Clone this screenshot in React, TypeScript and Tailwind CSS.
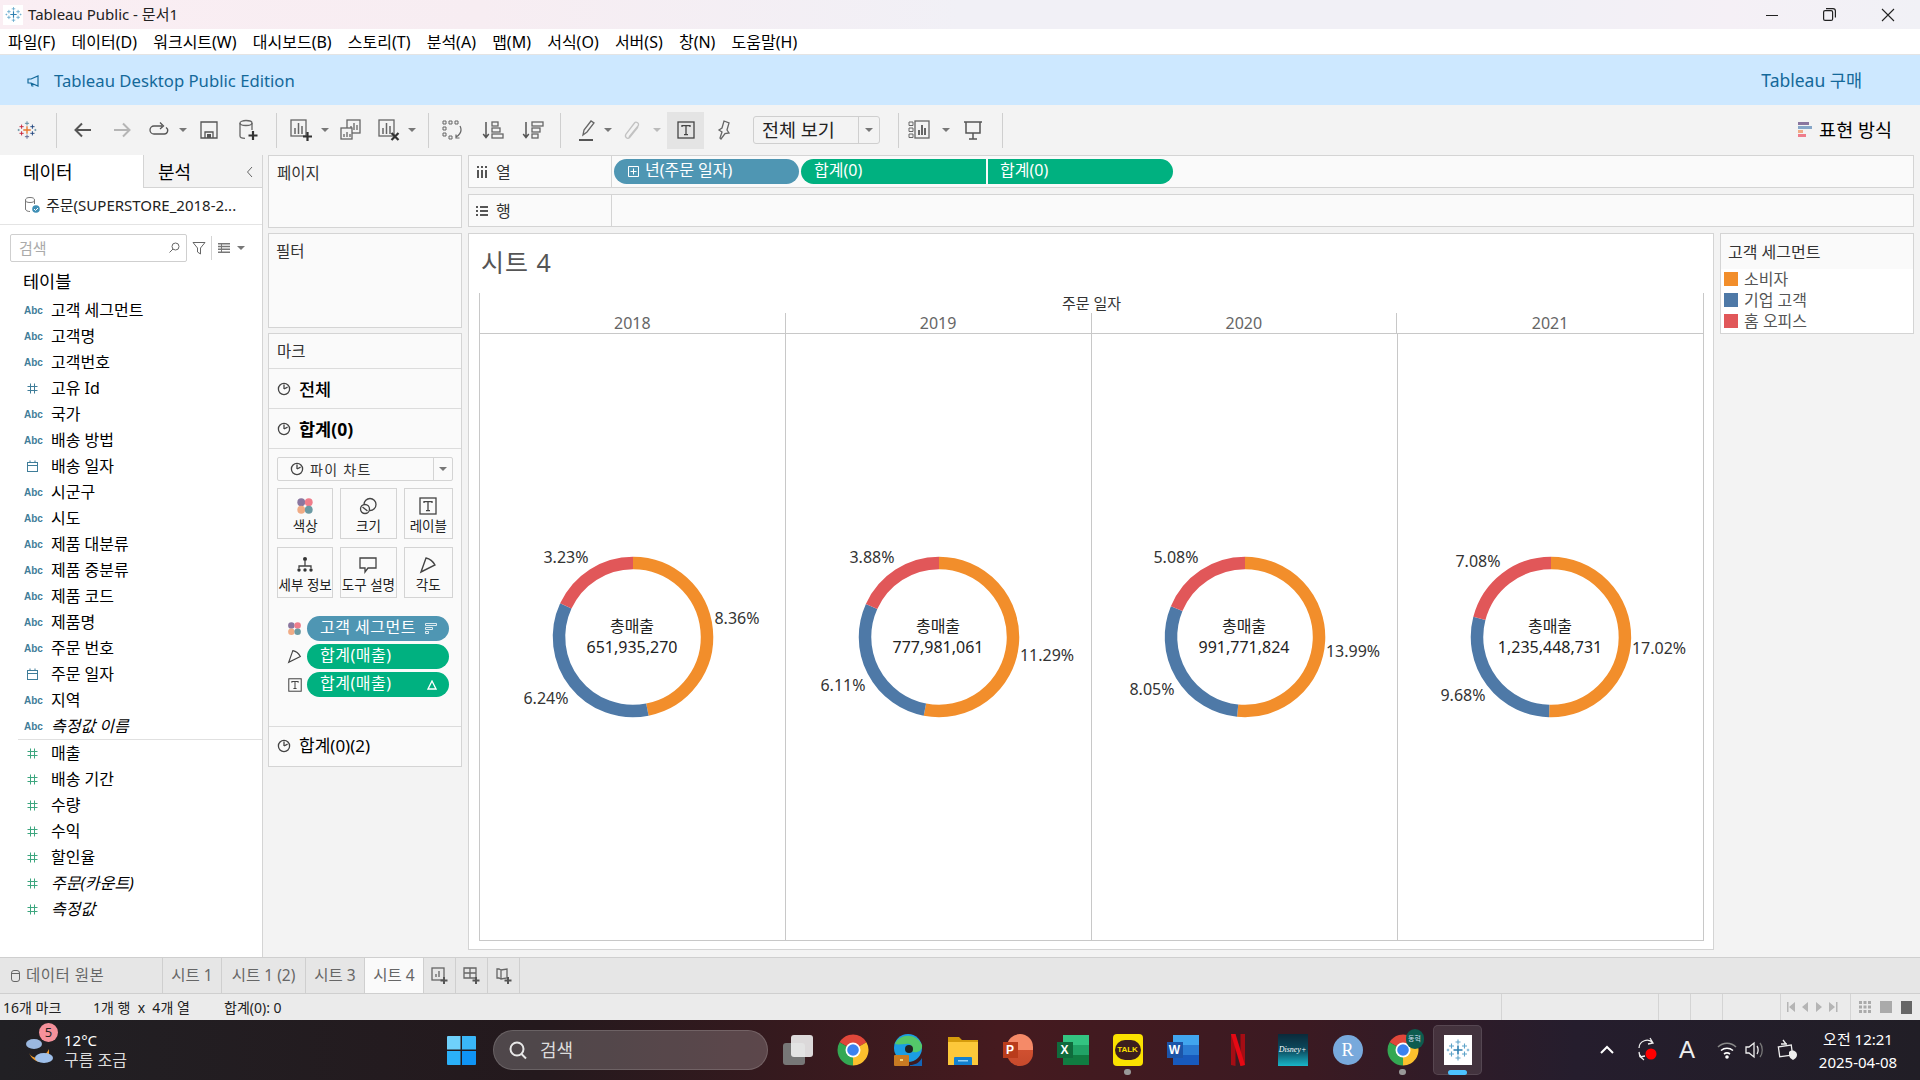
import type { ReactNode } from 'react'

const menus = ['파일(F)', '데이터(D)', '워크시트(W)', '대시보드(B)', '스토리(T)', '분석(A)', '맵(M)', '서식(O)', '서버(S)', '창(N)', '도움말(H)']

type Field = { kind: 'abc' | 'num' | 'date'; name: string; italic?: boolean }

const dimensions: Field[] = [
  { kind: 'abc', name: '고객 세그먼트' },
  { kind: 'abc', name: '고객명' },
  { kind: 'abc', name: '고객번호' },
  { kind: 'num', name: '고유 Id' },
  { kind: 'abc', name: '국가' },
  { kind: 'abc', name: '배송 방법' },
  { kind: 'date', name: '배송 일자' },
  { kind: 'abc', name: '시군구' },
  { kind: 'abc', name: '시도' },
  { kind: 'abc', name: '제품 대분류' },
  { kind: 'abc', name: '제품 중분류' },
  { kind: 'abc', name: '제품 코드' },
  { kind: 'abc', name: '제품명' },
  { kind: 'abc', name: '주문 번호' },
  { kind: 'date', name: '주문 일자' },
  { kind: 'abc', name: '지역' },
  { kind: 'abc', name: '측정값 이름', italic: true },
]

const measures: Field[] = [
  { kind: 'num', name: '매출' },
  { kind: 'num', name: '배송 기간' },
  { kind: 'num', name: '수량' },
  { kind: 'num', name: '수익' },
  { kind: 'num', name: '할인율' },
  { kind: 'num', name: '주문(카운트)', italic: true },
  { kind: 'num', name: '측정값', italic: true },
]

type Slice = { label: string; value: number; x: number; y: number }

const years: { year: string; total: string; orange: Slice; blue: Slice; red: Slice }[] = [
  {
    year: '2018',
    total: '651,935,270',
    orange: { label: '8.36%', value: 8.36, x: 257, y: 284 },
    blue: { label: '6.24%', value: 6.24, x: 66, y: 364 },
    red: { label: '3.23%', value: 3.23, x: 86, y: 223 },
  },
  {
    year: '2019',
    total: '777,981,061',
    orange: { label: '11.29%', value: 11.29, x: 261, y: 321 },
    blue: { label: '6.11%', value: 6.11, x: 57, y: 351 },
    red: { label: '3.88%', value: 3.88, x: 86, y: 223 },
  },
  {
    year: '2020',
    total: '991,771,824',
    orange: { label: '13.99%', value: 13.99, x: 261, y: 317 },
    blue: { label: '8.05%', value: 8.05, x: 60, y: 355 },
    red: { label: '5.08%', value: 5.08, x: 84, y: 223 },
  },
  {
    year: '2021',
    total: '1,235,448,731',
    orange: { label: '17.02%', value: 17.02, x: 261, y: 314 },
    blue: { label: '9.68%', value: 9.68, x: 65, y: 361 },
    red: { label: '7.08%', value: 7.08, x: 80, y: 227 },
  },
]

function Icon({ size = 24, box = 24, className = '', children }: { size?: number; box?: number; className?: string; children: ReactNode }) {
  return (
    <svg width={size} height={size} viewBox={`0 0 ${box} ${box}`} fill="none" stroke="#666" strokeWidth="1.3" className={`shrink-0 ${className}`}>
      {children}
    </svg>
  )
}

function TableauMark({ size = 20, colored = false }: { size?: number; colored?: boolean }) {
  const c = colored
    ? { a: '#e8762c', b: '#c72037', c: '#5b6591', d: '#1f447e', e: '#59879b' }
    : { a: '#2f7fb0', b: '#5da3c9', c: '#5da3c9', d: '#5da3c9', e: '#5da3c9' }
  const cross = (x: number, y: number, r: number, color: string, w: number) => (
    <path key={`${x}-${y}`} d={`M${x - r} ${y}H${x + r}M${x} ${y - r}V${y + r}`} stroke={color} strokeWidth={w} />
  )
  return (
    <svg width={size} height={size} viewBox="0 0 24 24" className="shrink-0">
      {cross(12, 12, 4.5, c.a, 1.6)}
      {cross(12, 4, 2.5, c.e, 1.1)}
      {cross(12, 20, 2.5, c.c, 1.1)}
      {cross(5.5, 8, 2.5, c.b, 1.1)}
      {cross(18.5, 8, 2.5, c.d, 1.1)}
      {cross(5.5, 16, 2.5, c.b, 1.1)}
      {cross(18.5, 16, 2.5, c.d, 1.1)}
      {cross(2, 12, 1.3, c.e, 0.9)}
      {cross(22, 12, 1.3, c.e, 0.9)}
    </svg>
  )
}

function Caret({ className = '' }: { className?: string }) {
  return <span className={`h-0 w-0 shrink-0 border-x-[4px] border-t-[4px] border-x-transparent border-t-[#777] ${className}`} />
}

function Sep({ className = '' }: { className?: string }) {
  return <span className={`h-[35px] w-px shrink-0 bg-[#cfcfcf] ${className}`} />
}

function PieGlyph({ size = 14 }: { size?: number }) {
  return (
    <Icon size={size} box={14} className="shrink-0">
      <circle cx="7" cy="7" r="5.6" stroke="#444" />
      <path d="M7 7V2.5M7 7l3.6-1.8" stroke="#444" />
    </Icon>
  )
}

function DotsGlyph({ size = 24 }: { size?: number }) {
  return (
    <svg width={size} height={size} viewBox="0 0 24 24" className="shrink-0">
      <circle cx="7" cy="7" r="5.2" fill="#8a769f" />
      <circle cx="17" cy="7" r="5.2" fill="#ef7d8b" />
      <circle cx="7" cy="17" r="5.2" fill="#f0ab85" />
      <circle cx="17" cy="17" r="5.2" fill="#6b9aa3" />
    </svg>
  )
}

function TextGlyph({ size = 18 }: { size?: number }) {
  return (
    <Icon size={size} box={18}>
      <rect x="1" y="1" width="16" height="16" stroke="#444" />
      <path d="M5 6V4.6h8V6M9 4.6v9M7 13.6h4" stroke="#444" />
    </Icon>
  )
}

function AngleGlyph({ size = 18 }: { size?: number }) {
  return (
    <Icon size={size} box={18}>
      <path d="M2 16 7 2c4 .8 7 3.4 9 7z" stroke="#444" strokeWidth="1.4" />
    </Icon>
  )
}

function BarsBox({ x = 2, y = 2 }: { x?: number; y?: number }) {
  return (
    <>
      <rect x={x} y={y} width="15" height="16" />
      <path d={`M${x + 4} ${y + 14}V${y + 8}M${x + 7.5} ${y + 14}V${y + 3}M${x + 11} ${y + 14}V${y + 6}`} strokeWidth="1.5" />
    </>
  )
}

function ToolBar() {
  return (
    <div className="flex h-[50px] items-center bg-[#f3f3f3]">
      <span className="ml-[17px]">
        <TableauMark colored size={20} />
      </span>
      <Sep className="ml-[19px]" />
      <Icon className="ml-[14px]">
        <path d="M20 12H5M11 5.5 4.5 12l6.5 6.5" strokeWidth="2" stroke="#555" />
      </Icon>
      <Icon className="ml-[15px]">
        <path d="M4 12h15M13 5.5l6.5 6.5-6.5 6.5" strokeWidth="2" stroke="#b5b5b5" />
      </Icon>
      <Icon className="ml-[13px]">
        <path d="M15 8H7a4 4 0 0 0 0 8h10a3.5 3.5 0 0 0 2-6.5M13 4.5 16.5 8 13 11" stroke="#555" />
      </Icon>
      <Caret className="ml-[8px]" />
      <Icon className="ml-[10px]">
        <path d="M4 4h16v16H4zM8 20v-6h8v6" stroke="#555" />
        <rect x="10" y="16" width="4" height="4" fill="#555" stroke="none" />
      </Icon>
      <Icon className="ml-[15px]">
        <ellipse cx="10" cy="5" rx="6" ry="2.5" />
        <path d="M4 5v13c0 1.3 2 2.3 5 2.4M16 5v7" />
        <path d="M17 13v9M12.5 17.5h9" stroke="#333" strokeWidth="2.2" />
      </Icon>
      <Sep className="ml-[16px]" />
      <Icon className="ml-[12px]">
        <BarsBox />
        <path d="M18.5 14v9M14 18.5h9" stroke="#333" strokeWidth="2.2" />
      </Icon>
      <Caret className="ml-[8px]" />
      <Icon className="ml-[9px]">
        <rect x="9" y="2" width="13" height="13" fill="#f3f3f3" />
        <path d="M13 12V8M16 12V5M19 12V7" />
        <rect x="3" y="10" width="11" height="11" fill="#f3f3f3" />
        <path d="M6 19v-3M9 19v-5M12 19v-3" />
      </Icon>
      <Icon className="ml-[15px]">
        <BarsBox />
        <path d="m14.5 15 7 7M21.5 15l-7 7" stroke="#333" strokeWidth="2.2" />
      </Icon>
      <Caret className="ml-[7px]" />
      <Sep className="ml-[12px]" />
      <Icon className="ml-[11px]">
        <path d="M3 3h3v3H3zM9 3h3v3H9zM15 3h3v3h-3zM3 9h3v3H3zM3 15h3v3H3zM9 18h3v3H9z" strokeWidth="1" />
        <path d="M20 8c2 4 1 8-4 11M16 16.5V20h3.5" strokeWidth="1.2" />
      </Icon>
      <Icon className="ml-[16px]">
        <path d="M6 4v15M3.2 16 6 19.5 8.8 16" stroke="#555" strokeWidth="1.5" />
        <rect x="12" y="4" width="6" height="4" />
        <rect x="12" y="10" width="8" height="4" />
        <rect x="12" y="16" width="11" height="4" />
      </Icon>
      <Icon className="ml-[16px]">
        <path d="M6 4v15M3.2 16 6 19.5 8.8 16" stroke="#555" strokeWidth="1.5" />
        <rect x="12" y="4" width="11" height="4" />
        <rect x="12" y="10" width="8" height="4" />
        <rect x="12" y="16" width="6" height="4" />
      </Icon>
      <Sep className="ml-[16px]" />
      <Icon className="ml-[14px]">
        <path d="m8 17 1-5 7-9 3 2-7 9z" />
        <path d="M4 22h14" stroke="#555" strokeWidth="2" />
      </Icon>
      <Caret className="ml-[5px]" />
      <Icon className="ml-[8px]">
        <path d="m9 19 9-11c2-2.5-2-5-3.500-3L6 16c-1.800 3 1.500 6 4 3l8-10" stroke="#c2c2c2" />
      </Icon>
      <Caret className="ml-[9px] border-t-[#bbb]" />
      <span className="ml-[6px] flex h-[37px] w-[37px] shrink-0 items-center justify-center bg-[#e4e4e4]">
        <TextGlyph size={18} />
      </span>
      <Icon className="ml-[6px]">
        <path d="m14 3 5 2-2 7 2 3-4 .5L11 21l-1-1 2-6-3-2 3-2z" />
      </Icon>
      <div className="ml-[19px] flex h-[28px] w-[127px] shrink-0 items-center rounded-[3px] border border-[#cfcfcf]">
        <span className="w-[104px] whitespace-nowrap pl-[8px] text-[18.5px] text-[#222]">전체 보기</span>
        <span className="flex h-full flex-1 items-center justify-center border-l border-[#cfcfcf]">
          <Caret className="border-t-[#555]" />
        </span>
      </div>
      <Sep className="ml-[18px]" />
      <Icon className="ml-[8px]">
        <path d="M2 4h4v3.500H2zM2 10h4v3.500H2zM2 16h4v3.500H2z" strokeWidth="1" />
        <rect x="8" y="3" width="14" height="17" />
        <path d="M12 17v-5M15 17V7M18 17v-7" strokeWidth="2" />
      </Icon>
      <Caret className="ml-[11px]" />
      <Icon className="ml-[11px]">
        <path d="M3 4h18M5 4v11h14V4M12 15v6M8 21h8" stroke="#555" strokeWidth="1.5" />
      </Icon>
      <Sep className="ml-[17px]" />
      <div className="ml-auto mr-[28px] flex items-center gap-[7px]">
        <svg width="14" height="16" viewBox="0 0 14 16" className="shrink-0">
          <rect y="0" width="11" height="3" fill="#8a769f" />
          <rect y="4" width="14" height="3" fill="#86a6c8" />
          <rect y="8" width="5" height="3" fill="#f0ab85" />
          <rect y="12" width="8" height="3" fill="#ef7d8b" />
        </svg>
        <span className="text-[18.5px] text-black">표현 방식</span>
      </div>
    </div>
  )
}

function FieldRow({ field, tone }: { field: Field; tone: 'dim' | 'measure' }) {
  const color = tone === 'dim' ? '#3f7d99' : '#3da67f'
  return (
    <div className="flex h-[26px] items-center pl-[24px]">
      <span className="flex w-[27px] shrink-0 items-center">
        {field.kind === 'abc' && <span className="w-[17px] text-center font-['Liberation_Sans',sans-serif] text-[10px] font-bold text-[#3f7d99]">Abc</span>}
        {field.kind === 'num' && (
          <svg width="17" height="11" viewBox="0 0 17 11" fill="none" stroke={color} strokeWidth="1">
            <path d="M6.500 0.500V10.500M10.500 0.500V10.500M3.500 3.500H13.500M3.500 7.500H13.500" />
          </svg>
        )}
        {field.kind === 'date' && (
          <svg width="17" height="12" viewBox="0 0 17 12" fill="none" stroke={color} strokeWidth="1">
            <rect x="3.500" y="2.500" width="10" height="9" />
            <path d="M3.500 5.500h10M6 0.500v2M11 0.500v2" />
          </svg>
        )}
      </span>
      <span className={`text-[16px] text-black ${field.italic ? 'italic' : ''}`}>{field.name}</span>
    </div>
  )
}

function DataPane() {
  return (
    <aside className="flex w-[263px] shrink-0 flex-col border-r border-[#d4d4d4] bg-white">
      <div className="flex h-[33px]">
        <div className="flex w-[144px] items-center border-r border-[#d4d4d4] pl-[23px] pt-[2px] text-[18px] text-black">데이터</div>
        <div className="flex flex-1 items-center border-b border-[#d4d4d4] bg-[#f3f3f3] pl-[14px] pt-[2px] text-[18px] text-black">
          분석
          <svg width="8" height="12" viewBox="0 0 8 12" fill="none" stroke="#666" className="ml-[55px]">
            <path d="M6 1 1.500 6 6 11" />
          </svg>
        </div>
      </div>
      <div className="flex h-[37px] items-center gap-[6px] border-b border-[#e4e4e4] pb-[2px] pl-[24px]">
        <svg width="16" height="18" viewBox="0 0 16 18" fill="none" stroke="#777" className="shrink-0">
          <ellipse cx="6" cy="4" rx="4.500" ry="2.500" />
          <path d="M1.500 4v9c0 1.500 2 2.500 4.500 2.500M10.500 4v4" />
          <circle cx="12" cy="13" r="3.800" fill="#3f8fb5" stroke="none" />
          <path d="m10 13 1.500 1.500L14 12" stroke="#fff" />
        </svg>
        <span className="text-[15px] text-[#222]">주문(SUPERSTORE_2018-2...</span>
      </div>
      <div className="flex items-center pl-[10px] pt-[9px]">
        <div className="flex h-[28px] w-[177px] items-center justify-between rounded-[2px] border border-[#cfcfcf] pl-[8px] pr-[6px]">
          <span className="text-[15px] text-[#aaa]">검색</span>
          <svg width="12" height="12" viewBox="0 0 12 12" fill="none" stroke="#666">
            <circle cx="7.500" cy="4.500" r="3.500" />
            <path d="M5 7 1.500 10.500" />
          </svg>
        </div>
        <svg width="14" height="14" viewBox="0 0 14 14" fill="none" stroke="#666" className="ml-[5px]">
          <path d="M1 1.500h12L8.500 7v6L5.500 11V7z" />
        </svg>
        <span className="ml-[5px] h-[24px] w-px bg-[#d4d4d4]" />
        <svg width="12" height="10" viewBox="0 0 12 10" fill="#777" className="ml-[6px]">
          <path d="M0 0h12v1.500H0zM0 2.800h12v1.500H0zM0 5.600h12v1.500H0zM0 8.400h12v1.500H0zM3 0h1v10H3z" />
        </svg>
        <Caret className="ml-[7px]" />
      </div>
      <div className="flex h-[35px] items-center pb-[3px] pl-[23px] pt-[6px] text-[17.5px] text-black">테이블</div>
      <div>
        {dimensions.map((f) => (
          <FieldRow key={f.name} field={f} tone="dim" />
        ))}
      </div>
      <div className="ml-[18px] h-px bg-[#e0e0e0]" />
      <div>
        {measures.map((f) => (
          <FieldRow key={f.name} field={f} tone="measure" />
        ))}
      </div>
    </aside>
  )
}

function MarkRow({ label, weight }: { label: string; weight: string }) {
  return (
    <div className={`flex h-[40px] items-center gap-[8px] border-b border-[#dcdcdc] pl-[8px] text-[17.5px] text-black ${weight}`}>
      <PieGlyph />
      <span className="pt-[1px]">{label}</span>
    </div>
  )
}

function MarkButton({ label, wide, children }: { label: string; wide: boolean; children: ReactNode }) {
  return (
    <div className={`flex h-[51px] flex-col items-center border border-[#d4d4d4] pt-[6px] ${wide ? 'w-[57px]' : 'w-[50px]'}`}>
      <span className="flex h-[22px] items-center">{children}</span>
      <span className="whitespace-nowrap text-[13.5px] leading-[18px] text-[#222]">{label}</span>
    </div>
  )
}

function MarkPill({ icon, label, end }: { icon: ReactNode; label: string; end?: ReactNode }) {
  return (
    <div className="flex h-[25px] items-center">
      <span className="flex w-[30px] justify-center pl-[5px]">{icon}</span>
      <div className={`flex h-[25px] w-[142px] items-center justify-between rounded-[13px] pl-[13px] pr-[12px] text-[16px] tracking-[0.5px] text-white ${label.startsWith('고객') ? 'bg-[#4f96b3]' : 'bg-[#00b180]'}`}>
        <span className="-mt-[3px] whitespace-nowrap">{label}</span>
        {end}
      </div>
    </div>
  )
}

function SidePanels() {
  return (
    <div className="ml-[5px] flex w-[194px] shrink-0 flex-col">
      <div className="h-[73px] border border-[#d4d4d4] bg-[#fafafa] pl-[8px] pt-[6px] text-[15.5px] text-[#333]">페이지</div>
      <div className="mt-[5px] h-[95px] border border-[#d4d4d4] bg-[#fafafa] pl-[7px] pt-[6px] text-[15.5px] text-[#333]">필터</div>
      <div className="mt-[5px] h-[434px] border border-[#d4d4d4] bg-[#fafafa]">
        <div className="flex h-[35px] items-center border-b border-[#dcdcdc] pl-[8px] pt-[2px] text-[15.5px] text-[#333]">마크</div>
        <MarkRow label="전체" weight="font-medium" />
        <MarkRow label="합계(0)" weight="font-bold" />
        <div className="mx-[8px] mt-[8px] flex h-[24px] items-center rounded-[2px] border border-[#d4d4d4]">
          <span className="flex w-[155px] items-center gap-[6px] whitespace-nowrap pl-[12px] text-[14px] tracking-[1.3px] text-[#333]">
            <PieGlyph />
            파이 차트
          </span>
          <span className="flex h-full flex-1 items-center justify-center border-l border-[#d4d4d4]">
            <Caret className="border-t-[#555]" />
          </span>
        </div>
        <div className="mx-[8px] mt-[7px] flex flex-col gap-[8px]">
          <div className="flex gap-[7px]">
            <MarkButton label="색상" wide>
              <DotsGlyph size={18} />
            </MarkButton>
            <MarkButton label="크기" wide>
              <Icon size={18} box={18}>
                <circle cx="11" cy="7.500" r="6" stroke="#444" />
                <circle cx="6" cy="12" r="4.500" fill="#fafafa" stroke="#444" />
                <path d="m3.500 10 5 4" stroke="#444" />
              </Icon>
            </MarkButton>
            <MarkButton label="레이블" wide={false}>
              <TextGlyph />
            </MarkButton>
          </div>
          <div className="flex gap-[7px]">
            <MarkButton label="세부 정보" wide>
              <Icon size={18} box={18}>
                <circle cx="9" cy="3" r="2" fill="#333" stroke="none" />
                <path d="M9 5v5M3 12v-2h12v2" stroke="#444" />
                <circle cx="3" cy="14" r="1.700" fill="#333" stroke="none" />
                <circle cx="9" cy="14" r="1.700" fill="#333" stroke="none" />
                <circle cx="15" cy="14" r="1.700" fill="#333" stroke="none" />
              </Icon>
            </MarkButton>
            <MarkButton label="도구 설명" wide>
              <Icon size={18} box={18}>
                <path d="M1 2h16v10H9l-3 4v-4H1z" stroke="#444" />
              </Icon>
            </MarkButton>
            <MarkButton label="각도" wide={false}>
              <AngleGlyph />
            </MarkButton>
          </div>
        </div>
        <div className="mt-[18px] flex flex-col gap-[3px] pl-[8px]">
          <MarkPill
            icon={<DotsGlyph size={15} />}
            label="고객 세그먼트"
            end={
              <svg width="12" height="11" viewBox="0 0 12 11" fill="none" stroke="#fff">
                <path d="M0.500 0.500h11v2h-11zM0.500 4.500h7v2h-7zM0.500 8.500h3v2h-3z" strokeWidth="0.800" />
              </svg>
            }
          />
          <MarkPill icon={<AngleGlyph size={15} />} label="합계(매출)" />
          <MarkPill
            icon={<TextGlyph size={14} />}
            label="합계(매출)"
            end={
              <svg width="10" height="10" viewBox="0 0 10 10" fill="none" stroke="#fff" strokeWidth="1.300">
                <path d="M5 1 1 9h8z" />
              </svg>
            }
          />
        </div>
        <div className="mt-[29px] flex h-[39px] items-center gap-[8px] border-t border-[#dcdcdc] pl-[8px] text-[17px] text-black">
          <PieGlyph />
          합계(0)(2)
        </div>
      </div>
    </div>
  )
}

function Shelf({ label, icon, children }: { label: string; icon: ReactNode; children?: ReactNode }) {
  return (
    <div className="flex h-[33px] border border-[#d4d4d4] bg-[#fafafa]">
      <div className="flex w-[143px] items-center gap-[8px] border-r border-[#d4d4d4] pl-[7px] text-[16px] text-[#333]">
        {icon}
        {label}
      </div>
      <div className="flex items-center gap-[2px] pl-[2px]">{children}</div>
    </div>
  )
}

function arc(cx: number, cy: number, r: number, from: number, to: number) {
  const pt = (t: number) => {
    const a = t * 2 * Math.PI - Math.PI / 2
    return `${(cx + r * Math.cos(a)).toFixed(2)} ${(cy + r * Math.sin(a)).toFixed(2)}`
  }
  return `M${pt(from)}A${r} ${r} 0 ${to - from > 0.5 ? 1 : 0} 1 ${pt(to)}`
}

function Donut({ data }: { data: (typeof years)[number] }) {
  const total = data.orange.value + data.blue.value + data.red.value
  const parts = [
    { s: data.orange, color: '#f28e2b' },
    { s: data.blue, color: '#4e79a7' },
    { s: data.red, color: '#e15759' },
  ]
  let start = 0
  return (
    <svg width="305" height="606" viewBox="0 0 305 606" className="block">
      {parts.map((p) => {
        const end = start + p.s.value / total
        const el = <path key={p.color} d={arc(153, 303, 74, start, end)} fill="none" stroke={p.color} strokeWidth="12.500" />
        start = end
        return el
      })}
      {parts.map((p) => (
        <text key={p.s.label} x={p.s.x} y={p.s.y} textAnchor="middle" dominantBaseline="central" className="fill-[#333] text-[16px]">
          {p.s.label}
        </text>
      ))}
      <text x="152" y="292" textAnchor="middle" dominantBaseline="central" className="fill-[#222] text-[16px]">
        총매출
      </text>
      <text x="152" y="313" textAnchor="middle" dominantBaseline="central" className="fill-[#222] text-[16px]">
        {data.total}
      </text>
    </svg>
  )
}

function SheetView() {
  return (
    <div className="flex h-[717px] w-[1246px] shrink-0 flex-col border border-[#d4d4d4] bg-white pl-[10px] pr-[9px]">
      <div className="flex h-[59px] items-center pb-[2px] pl-[2px] text-[25px] tracking-[1px] text-[#555]">시트 4</div>
      <div className="flex h-[648px] flex-col border-x border-b border-[#c8c8c8]">
        <div className="flex h-[20px] items-center justify-center text-[15px] text-[#333]">주문 일자</div>
        <div className="flex h-[21px] border-b border-[#c8c8c8]">
          {years.map((y, i) => (
            <div key={y.year} className={`flex w-[306px] items-center justify-center text-[16px] text-[#666] ${i < 3 ? 'border-r border-[#c8c8c8]' : ''}`}>
              {y.year}
            </div>
          ))}
        </div>
        <div className="flex flex-1">
          {years.map((y, i) => (
            <div key={y.year} className={`w-[306px] ${i < 3 ? 'border-r border-[#c8c8c8]' : ''}`}>
              <Donut data={y} />
            </div>
          ))}
        </div>
      </div>
    </div>
  )
}

function Legend() {
  const items = [
    ['소비자', 'bg-[#f28e2b]'],
    ['기업 고객', 'bg-[#4e79a7]'],
    ['홈 오피스', 'bg-[#e15759]'],
  ]
  return (
    <div className="h-[101px] w-[194px] shrink-0 border border-[#d4d4d4] bg-white">
      <div className="flex h-[35px] items-center bg-[#fafafa] pl-[7px] text-[16px] text-[#333]">고객 세그먼트</div>
      <div className="flex flex-col gap-[7px] pl-[3px] pt-[3px]">
        {items.map(([label, bg]) => (
          <div key={label} className="flex h-[14px] items-center gap-[6px]">
            <span className={`h-[14px] w-[14px] ${bg}`} />
            <span className="text-[16px] text-[#555]">{label}</span>
          </div>
        ))}
      </div>
    </div>
  )
}

function MainArea() {
  return (
    <div className="flex flex-1">
      <DataPane />
      <SidePanels />
      <div className="ml-[6px] flex w-[1446px] shrink-0 flex-col gap-[6px]">
        <Shelf
          label="열"
          icon={
            <svg width="12" height="12" viewBox="0 0 12 12" fill="#555">
              <path d="M1 4h2v8H1zM5 4h2v8H5zM9 4h2v8H9zM1 0h2v2H1zM5 0h2v2H5zM9 0h2v2H9z" />
            </svg>
          }
        >
          <div className="flex h-[25px] w-[185px] items-center gap-[6px] rounded-[13px] bg-[#4f96b3] pl-[14px] text-[16px] text-white">
            <svg width="11" height="11" viewBox="0 0 11 11" fill="none" stroke="#fff" className="shrink-0">
              <path d="M0.500 0.500h10v10h-10zM5.500 2.500v6M2.500 5.500h6" />
            </svg>
            <span className="-mt-[3px]">년(주문 일자)</span>
          </div>
          <div className="flex h-[25px] w-[185px] items-center rounded-l-[13px] bg-[#00b180] pl-[13px] text-[16px] text-white">
            <span className="-mt-[3px]">합계(0)</span>
          </div>
          <div className="flex h-[25px] w-[185px] items-center rounded-r-[13px] bg-[#00b180] pl-[12px] text-[16px] text-white">
            <span className="-mt-[3px]">합계(0)</span>
          </div>
        </Shelf>
        <Shelf
          label="행"
          icon={
            <svg width="12" height="12" viewBox="0 0 12 12" fill="#555">
              <path d="M0 1h2v2H0zM4 1h8v2H4zM0 5h2v2H0zM4 5h8v2H4zM0 9h2v2H0zM4 9h8v2H4z" />
            </svg>
          }
        />
        <div className="flex gap-[6px]">
          <SheetView />
          <Legend />
        </div>
      </div>
    </div>
  )
}

function SheetTabs() {
  const tabs = [
    { name: '시트 1', w: 'w-[59px]' },
    { name: '시트 1 (2)', w: 'w-[84px]' },
    { name: '시트 3', w: 'w-[59px]' },
  ]
  return (
    <div className="flex h-[37px] border-y border-[#cfcfcf] bg-[#e6e6e6]">
      <div className="flex w-[163px] items-center gap-[6px] border-r border-[#cfcfcf] pl-[11px] pt-[1px] text-[15.5px] tracking-[0.5px] text-[#666]">
        <svg width="9" height="12" viewBox="0 0 9 12" fill="none" stroke="#666" className="shrink-0">
          <rect x="0.500" y="0.500" width="8" height="11" rx="2.500" />
          <path d="M0.500 3.500h8" />
        </svg>
        데이터 원본
      </div>
      {tabs.map((t) => (
        <div key={t.name} className={`flex ${t.w} items-center justify-center whitespace-nowrap border-r border-[#cfcfcf] pt-[1px] text-[15.5px] text-[#666]`}>
          {t.name}
        </div>
      ))}
      <div className="flex w-[59px] items-center justify-center border-r border-[#cfcfcf] bg-[#fafafa] pt-[1px] text-[15.5px] text-[#666]">시트 4</div>
      <div className="flex w-[32px] items-center justify-center border-r border-[#cfcfcf]">
        <Icon size={18} box={18}>
          <rect x="1" y="1" width="12" height="12" />
          <path d="M5 10V7M8 10V4" />
          <path d="M13 10v7M9.500 13.500h7" stroke="#555" strokeWidth="2" />
        </Icon>
      </div>
      <div className="flex w-[32px] items-center justify-center border-r border-[#cfcfcf]">
        <Icon size={18} box={18}>
          <path d="M1 1h12v10H1zM1 6h12M7 1v10" />
          <path d="M13 10v7M9.500 13.500h7" stroke="#555" strokeWidth="2" />
        </Icon>
      </div>
      <div className="flex w-[32px] items-center justify-center border-r border-[#cfcfcf]">
        <Icon size={18} box={18}>
          <path d="M2 2h2l2 1 6-1v9l-6 1-2-1H2zM6 3v9" />
          <path d="M13 10v7M9.500 13.500h7" stroke="#555" strokeWidth="2" />
        </Icon>
      </div>
    </div>
  )
}

function StatusBar() {
  return (
    <div className="flex h-[26px] items-center bg-[#ebebeb] text-[14px] text-[#222]">
      <span className="ml-[3px] w-[90px]">16개 마크</span>
      <span className="w-[131px] whitespace-pre">1개 행  x  4개 열</span>
      <span className="w-[1277px]">합계(0): 0</span>
      <span className="h-full w-[157px] border-l border-[#d4d4d4]" />
      <span className="h-full w-[32px] border-l border-[#d4d4d4]" />
      <span className="h-full w-[32px] border-l border-[#d4d4d4]" />
      <span className="h-full w-[58px] border-l border-[#d4d4d4]" />
      <div className="flex h-full w-[70px] items-center justify-center gap-[7px] border-l border-[#d4d4d4]">
        <svg width="60" height="10" viewBox="0 0 60 10" fill="#b5b5b5">
          <path d="M1 0h1.500v10H1zM9 0v10L3 5zM22 0v10l-6-5zM30 0v10l6-5zM43 0v10l6-5zM50 0h1.500v10H50z" />
        </svg>
      </div>
      <div className="flex h-full flex-1 items-center gap-[9px] border-l border-[#d4d4d4] pl-[8px]">
        <svg width="12" height="12" viewBox="0 0 12 12" fill="#aaa">
          <path d="M0 0h3v3H0zM4.500 0h3v3h-3zM9 0h3v3H9zM0 4.500h3v3H0zM4.500 4.500h3v3h-3zM9 4.500h3v3H9zM0 9h3v3H0zM4.500 9h3v3h-3zM9 9h3v3H9z" />
        </svg>
        <span className="h-[12px] w-[12px] bg-[#aaa]" />
        <span className="h-[13px] w-[11px] bg-[#666]" />
      </div>
    </div>
  )
}

function Chrome() {
  return (
    <svg width="32" height="32" viewBox="0 0 32 32">
      <g fill="none" strokeWidth="11">
        <circle cx="16" cy="16" r="10" stroke="#e0473a" pathLength={3} strokeDasharray="1 2" transform="rotate(-150 16 16)" />
        <circle cx="16" cy="16" r="10" stroke="#fbc02d" pathLength={3} strokeDasharray="1 2" transform="rotate(-30 16 16)" />
        <circle cx="16" cy="16" r="10" stroke="#34a853" pathLength={3} strokeDasharray="1 2" transform="rotate(90 16 16)" />
      </g>
      <circle cx="16" cy="16" r="7.500" fill="#fff" />
      <circle cx="16" cy="16" r="5.800" fill="#3b82f0" />
    </svg>
  )
}

function OfficeIcon({ letter, tile, a, b, c }: { letter: string; tile: string; a: string; b: string; c: string }) {
  return (
    <div className="relative h-[30px] w-[32px]">
      <svg width="26" height="30" viewBox="0 0 26 30" className="absolute right-0 top-0">
        <rect width="26" height="10" fill={a} />
        <rect y="10" width="26" height="10" fill={b} />
        <rect y="20" width="26" height="10" fill={c} />
      </svg>
      <span className={`absolute left-0 top-[7px] flex h-[16px] w-[16px] items-center justify-center font-['Liberation_Sans',sans-serif] text-[12px] font-bold text-white ${tile}`}>{letter}</span>
    </div>
  )
}

function Taskbar() {
  return (
    <div className="flex h-[60px] items-center bg-[linear-gradient(90deg,#212024_0%,#24191d_28%,#451a1f_52%,#3b1a22_68%,#251d2d_82%,#211e26_100%)] text-white">
      <div className="relative ml-[24px] flex w-[417px] shrink-0 items-center">
        <svg width="32" height="34" viewBox="0 0 32 34" className="shrink-0">
          <ellipse cx="10" cy="11" rx="8" ry="5" fill="#9bb8e0" />
          <path d="M5 20c3 6 14 8 20-4v10c-7 6-16 3-20-6z" fill="#f09a2a" />
          <ellipse cx="20" cy="25" rx="9" ry="5" fill="#9fc0ea" />
        </svg>
        <span className="absolute left-[15px] top-[-7px] flex h-[19px] w-[19px] items-center justify-center rounded-full bg-[#f5919b] text-[13px] text-[#222]">5</span>
        <div className="ml-[8px] flex flex-col leading-[20px]">
          <span className="text-[15px]">12°C</span>
          <span className="text-[16px] text-[#ddd]">구름 조금</span>
        </div>
      </div>
      <svg width="29" height="29" viewBox="0 0 29 29" className="ml-[6px] shrink-0">
        <path d="M1 0h12.500v13.500H0V1a1 1 0 0 1 1-1z" fill="#6fd1fb" />
        <path d="M15 0h13a1 1 0 0 1 1 1v12.500H15z" fill="#3ab7f8" />
        <path d="M0 15h13.500v14H1a1 1 0 0 1-1-1z" fill="#2bb0f8" />
        <path d="M15 15h14v13a1 1 0 0 1-1 1H15z" fill="#0f94f5" />
      </svg>
      <div className="ml-[17px] flex h-[40px] w-[275px] shrink-0 items-center gap-[12px] rounded-[20px] border border-white/15 bg-white/20 pl-[14px] text-[18px] text-[#ddd]">
        <svg width="20" height="20" viewBox="0 0 20 20" fill="none" stroke="#e8e8e8" strokeWidth="2">
          <circle cx="9" cy="9" r="6.500" />
          <path d="m13.500 14 4.500 4.500" />
        </svg>
        검색
      </div>
      <div className="ml-[2px] flex shrink-0">
        <TaskSlot>
          <div className="relative h-[30px] w-[30px]">
            <span className="absolute bottom-0 left-0 h-[22px] w-[22px] rounded-[3px] bg-[#777]" />
            <span className="absolute right-0 top-0 h-[22px] w-[22px] rounded-[3px] bg-[#eee]/90" />
          </div>
        </TaskSlot>
        <TaskSlot>
          <Chrome />
        </TaskSlot>
        <TaskSlot>
          <svg width="32" height="34" viewBox="0 0 32 34">
            <circle cx="16" cy="15" r="14" fill="#1b9de2" />
            <path d="M3 11C7 1 24-1 30 12c1 6-6 9-11 6 3-3 0-8-5-7-4 0-8 1-11 0z" fill="#54c86a" />
            <circle cx="17" cy="16" r="4" fill="#222" />
            <rect x="2" y="22" width="15" height="11" rx="1" fill="#c87a22" />
            <rect x="8" y="26" width="3" height="2" fill="#f5d37a" />
            <path d="M18 32c5 0 9-2 12-7v8H18z" fill="#1466b8" />
          </svg>
        </TaskSlot>
        <TaskSlot>
          <svg width="30" height="30" viewBox="0 0 30 30">
            <path d="M0 2h11l3 3h16v4H0z" fill="#d59c0c" />
            <rect y="7" width="30" height="23" fill="#fcc83a" />
            <path d="M7 22h16a1 1 0 0 1 1 1v7H6v-7a1 1 0 0 1 1-1z" fill="#1280d0" />
            <rect x="10" y="25" width="10" height="1.500" fill="#8fd0f5" />
          </svg>
        </TaskSlot>
        <TaskSlot>
          <div className="relative h-[32px] w-[30px]">
            <span className="absolute right-0 top-0 h-[32px] w-[26px] rounded-full bg-[linear-gradient(180deg,#f58a68_0%,#f58a68_50%,#d05030_50%,#c64a2c_100%)]" />
            <span className="absolute left-0 top-[8px] flex h-[16px] w-[15px] items-center justify-center bg-[#b93c1c] font-['Liberation_Sans',sans-serif] text-[12px] font-bold text-white">P</span>
          </div>
        </TaskSlot>
        <TaskSlot>
          <OfficeIcon letter="X" tile="bg-[#0f6b3c]" a="#33c481" b="#21a366" c="#107c41" />
        </TaskSlot>
        <TaskSlot dot>
          <div className="flex h-[32px] w-[30px] items-center justify-center rounded-[4px] bg-[#fae100]">
            <span className="flex h-[20px] w-[26px] items-center justify-center rounded-full bg-[#3c1e1e] font-['Liberation_Sans',sans-serif] text-[8px] font-bold text-[#fae100]">TALK</span>
          </div>
        </TaskSlot>
        <TaskSlot>
          <OfficeIcon letter="W" tile="bg-[#1c54a8]" a="#41a5ee" b="#2b7cd3" c="#185abd" />
        </TaskSlot>
        <TaskSlot>
          <svg width="14" height="32" viewBox="0 0 14 32">
            <path d="M0 0h4.500v32L0 31z" fill="#a50d14" />
            <path d="M9.500 0H14v31l-4.500 1z" fill="#a50d14" />
            <path d="M0 0h4.500L14 31l-4.500 1z" fill="#e50914" />
          </svg>
        </TaskSlot>
        <TaskSlot>
          <div className="flex h-[32px] w-[30px] items-center justify-center bg-[linear-gradient(180deg,#0a2a3a_0%,#0c4a5e_50%,#19b6c8_100%)] font-['Liberation_Serif',serif] text-[8px] italic text-white">Disney+</div>
        </TaskSlot>
        <TaskSlot>
          <div className="flex h-[30px] w-[30px] items-center justify-center rounded-full bg-[#78a9dc] font-['Liberation_Serif',serif] text-[18px] text-white">R</div>
        </TaskSlot>
        <TaskSlot dot>
          <div className="relative">
            <Chrome />
            <span className="absolute -right-[5px] -top-[5px] flex h-[20px] w-[18px] items-center justify-center rounded-full bg-[#0d5c4f] text-[7px] text-[#cde]">동혁</span>
          </div>
        </TaskSlot>
        <TaskSlot active>
          <div className="flex h-[30px] w-[28px] items-center justify-center bg-white">
            <TableauMark size={24} />
          </div>
        </TaskSlot>
      </div>
      <svg width="16" height="10" viewBox="0 0 16 10" fill="none" stroke="#fff" strokeWidth="2" className="ml-[114px] shrink-0">
        <path d="m2 8 6-6 6 6" />
      </svg>
      <svg width="22" height="26" viewBox="0 0 22 26" fill="none" stroke="#eee" strokeWidth="1.300" className="ml-[21px] shrink-0">
        <path d="M3 11a8 8 0 0 1 14-5M14 1l3 5-5 1M4 20l-1-5M4 20l5-1" />
        <path d="M8 23a8 8 0 0 1-4-5" />
        <circle cx="15" cy="17" r="5.500" fill="#f00" stroke="none" />
      </svg>
      <span className="ml-[21px] w-[16px] font-['Liberation_Sans',sans-serif] text-[24px] text-[#eee]">A</span>
      <svg width="20" height="20" viewBox="0 0 20 20" fill="none" stroke="#fff" strokeWidth="1.600" className="ml-[22px] shrink-0">
        <path d="M1 7c5-5 13-5 18 0" stroke="#888" />
        <path d="M4 10.500c3.500-3 8.500-3 12 0M7 14c2-1.500 4-1.500 6 0" />
        <circle cx="10" cy="17" r="1" fill="#fff" />
      </svg>
      <svg width="22" height="20" viewBox="0 0 22 20" fill="none" stroke="#eee" strokeWidth="1.300" className="ml-[8px] shrink-0">
        <path d="M1 7h3l5-4v14l-5-4H1z" />
        <path d="M12 6c1.500 2 1.500 6 0 8" />
        <path d="M15 3c3 3.500 3 10.500 0 14" stroke="#777" />
      </svg>
      <svg width="24" height="24" viewBox="0 0 24 24" fill="none" stroke="#eee" strokeWidth="1.300" className="ml-[9px] shrink-0">
        <rect x="3" y="8" width="13" height="10" transform="rotate(-8 9 13)" />
        <path d="m7 2 3 4M5 6h6" />
        <path d="M13 14c3-3 8-1 8 3 0 2-2 4-4 5-2-1-4-3-4-5z" fill="#eee" stroke="none" />
      </svg>
      <div className="ml-[12px] flex w-[92px] shrink-0 flex-col items-center whitespace-nowrap text-[15px] leading-[23px]">
        <span className="pt-[1px]">오전 12:21</span>
        <span>2025-04-08</span>
      </div>
    </div>
  )
}

function TaskSlot({ children, dot, active }: { children: ReactNode; dot?: boolean; active?: boolean }) {
  return (
    <div className="relative flex h-[50px] w-[55px] items-center justify-center">
      {active && <span className="absolute inset-y-0 left-[3px] right-[3px] rounded-[5px] border border-white/10 bg-white/10" />}
      <span className="relative flex">{children}</span>
      {dot && <span className="absolute bottom-0 left-[24px] h-[6px] w-[7px] rounded-full bg-[#999]" />}
      {active && <span className="absolute bottom-[0px] left-[18px] h-[5px] w-[19px] rounded-full bg-[#4cc2ff]" />}
    </div>
  )
}

export default function App() {
  return (
    <div className="flex h-[1080px] w-[1920px] flex-col overflow-hidden bg-[#f3f3f3] font-['Noto_Sans','Noto_Sans_CJK_KR',sans-serif]">
      <div className="flex h-[29px] items-center bg-[linear-gradient(90deg,#faeef3_0%,#f7edf2_25%,#f1f0f6_50%,#f1f0f6_80%,#f5f0f6_90%,#f1f1f6_100%)]">
        <span className="ml-[3px] flex h-[20px] w-[20px] items-center justify-center bg-white">
          <TableauMark size={17} />
        </span>
        <span className="ml-[5px] text-[15px] text-[#222]">Tableau Public - 문서1</span>
        <svg width="12" height="12" viewBox="0 0 12 12" stroke="#222" className="ml-auto">
          <path d="M0 6.500h12" />
        </svg>
        <svg width="13" height="13" viewBox="0 0 13 13" fill="none" stroke="#222" strokeWidth="1.200" className="ml-[45px]">
          <rect x="0.600" y="2.600" width="9" height="9.800" rx="1.500" />
          <path d="M3 0.600h7a2.500 2.500 0 0 1 2.400 2.500v6.500" />
        </svg>
        <svg width="14" height="14" viewBox="0 0 14 14" stroke="#222" strokeWidth="1.100" className="ml-[45px] mr-[25px]">
          <path d="m1 1 12 12M13 1 1 13" />
        </svg>
      </div>
      <div className="flex h-[26px] items-center gap-[16.2px] border-b border-[#e4e4e4] bg-white pl-[8px] text-[16px] text-black">
        {menus.map((m) => (
          <span key={m}>{m}</span>
        ))}
      </div>
      <div className="flex h-[50px] items-center bg-[#cde8ff] pt-[1px] text-[#14699a]">
        <svg width="14" height="14" viewBox="0 0 14 14" fill="none" stroke="#14699a" strokeWidth="1.200" className="ml-[27px]">
          <path d="M1 5v4h3l7 3V2L4 5zM4 9l1 3h1.500" />
        </svg>
        <span className="ml-[13px] text-[16.7px]">Tableau Desktop Public Edition</span>
        <span className="ml-auto mr-[58px] text-[17.5px]">Tableau 구매</span>
      </div>
      <ToolBar />
      <MainArea />
      <SheetTabs />
      <StatusBar />
      <Taskbar />
    </div>
  )
}
